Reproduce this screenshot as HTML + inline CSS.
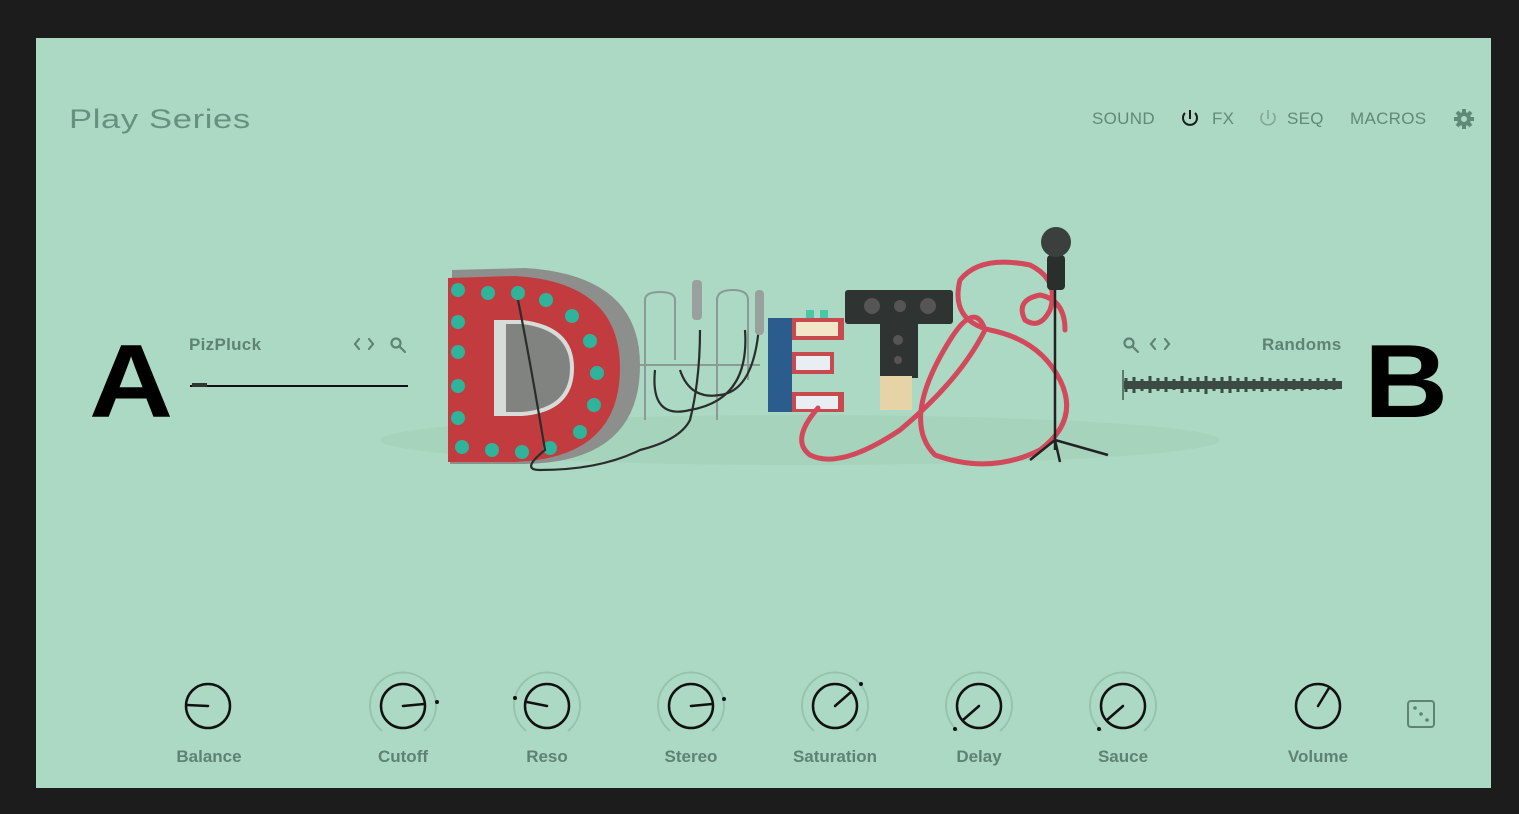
<!DOCTYPE html>
<html><head><meta charset="utf-8"><style>
html,body{margin:0;padding:0}
body{width:1519px;height:814px;background:#1c1c1c;position:relative;overflow:hidden;font-family:"Liberation Sans",sans-serif}
#p{position:absolute;left:36px;top:38px;width:1455px;height:750px;background:#acd9c3}
.t{position:absolute;color:#5f8a77;font-size:17px;letter-spacing:0.3px}
.lbl{position:absolute;color:#5f8373;font-size:17px;font-weight:bold;width:140px;text-align:center;top:747px}
.big{position:absolute;font-size:104px;font-weight:900;color:#000;line-height:1;transform:scaleX(1.12);transform-origin:left top}
</style></head><body>
<div id="p"></div>
<div class="t" style="left:69px;top:104px;font-size:27px;letter-spacing:0.5px;transform:scaleX(1.28);transform-origin:left top;color:#65917e">Play Series</div>
<div class="t" style="left:1092px;top:109px">SOUND</div>
<div class="t" style="left:1212px;top:109px">FX</div>
<div class="t" style="left:1287px;top:109px">SEQ</div>
<div class="t" style="left:1350px;top:109px">MACROS</div>
<div class="t" style="left:189px;top:335px;font-weight:bold;font-size:17px;color:#5f8373">PizPluck</div>
<div class="t" style="left:1262px;top:335px;font-weight:bold;font-size:17px;color:#5f8373">Randoms</div>
<div class="big" style="left:89px;top:330px">A</div>
<div class="big" style="left:1364px;top:330px">B</div>
<div class="lbl" style="left:139px">Balance</div>
<div class="lbl" style="left:333px">Cutoff</div>
<div class="lbl" style="left:477px">Reso</div>
<div class="lbl" style="left:621px">Stereo</div>
<div class="lbl" style="left:765px">Saturation</div>
<div class="lbl" style="left:909px">Delay</div>
<div class="lbl" style="left:1053px">Sauce</div>
<div class="lbl" style="left:1248px">Volume</div>
<svg width="1519" height="814" style="position:absolute;left:0;top:0">
<g fill="none" stroke="#1a1a1a" stroke-width="2">
<path d="M1185 113 A7 7 0 1 0 1195 113"/><path d="M1190 110 V119"/>
</g>
<g fill="none" stroke="#7fa896" stroke-width="1.6">
<path d="M1263 113 A7 7 0 1 0 1273 113"/><path d="M1268 110 V119"/>
</g>
<g transform="translate(1464 119)" fill="#5f8a77">
<circle r="7"/>
<g stroke="#5f8a77" stroke-width="4"><path d="M0 -10 V10 M-10 0 H10 M-7 -7 L7 7 M-7 7 L7 -7"/></g>
<circle r="3" fill="#acd9c3"/>
</g>
<g fill="none" stroke="#5f8373" stroke-width="2.2" stroke-linecap="round">
<path d="M359 339 L355 344 L359 349 M369 339 L373 344 L369 349"/>
<circle cx="396" cy="343" r="4.5"/><path d="M399 346 L405 352"/>
<circle cx="1129" cy="343" r="4.5"/><path d="M1132 346 L1138 352"/>
<path d="M1155 339 L1151 344 L1155 349 M1165 339 L1169 344 L1165 349"/>
</g>
<path d="M190 386 H408" stroke="#111" stroke-width="2"/>
<path d="M192 385 H207" stroke="#333" stroke-width="4"/>
<path d="M1123 370 V400" stroke="#2a3a33" stroke-width="1.2"/>
<rect x="1124" y="381" width="218" height="8" fill="#3b4a43"/>
<path d="M1126 378 v14 M1134 377 v16 M1142 379 v12 M1150 376 v17 M1158 378 v13 M1166 377 v15 M1174 379 v11 M1182 376 v17 M1190 378 v14 M1198 377 v15 M1206 376 v18 M1214 378 v13 M1222 377 v16 M1230 376 v17 M1238 378 v14 M1246 377 v15 M1254 379 v12 M1262 377 v15 M1270 378 v13 M1278 379 v12 M1286 378 v13 M1294 379 v11 M1302 378 v13 M1310 379 v11 M1318 378 v12 M1326 379 v11 M1334 378 v12" stroke="#3b4a43" stroke-width="3"/>
<ellipse cx="800" cy="440" rx="420" ry="25" fill="#a0ceb8" opacity="0.6"/>
<path d="M452 270 L525 268 Q640 275 640 365 Q640 462 525 464 L450 464 Z" fill="#8d8f8d"/>
<path d="M448 278 L515 276 Q620 282 620 368 Q620 458 515 462 L448 462 Z" fill="#c23c3f"/>
<path d="M494 320 L522 320 Q574 326 574 368 Q574 412 522 416 L494 416 Z" fill="#d8dcd8"/>
<path d="M506 324 L522 324 Q570 330 570 368 Q570 408 522 412 L506 412 Z" fill="#2a2a2a" opacity="0.5"/>
<g fill="#2fb39a">
<circle cx="458" cy="290" r="7"/><circle cx="488" cy="293" r="7"/><circle cx="518" cy="293" r="7"/><circle cx="546" cy="300" r="7"/><circle cx="572" cy="316" r="7"/><circle cx="590" cy="341" r="7"/><circle cx="597" cy="373" r="7"/><circle cx="594" cy="405" r="7"/><circle cx="580" cy="432" r="7"/>
<circle cx="458" cy="322" r="7"/><circle cx="458" cy="352" r="7"/><circle cx="458" cy="386" r="7"/><circle cx="458" cy="418" r="7"/><circle cx="462" cy="447" r="7"/><circle cx="492" cy="450" r="7"/><circle cx="522" cy="452" r="7"/><circle cx="550" cy="448" r="7"/>
</g>
<g fill="none" stroke="#8a9a94" stroke-width="2">
<path d="M645 420 V300 Q645 292 660 292 Q675 292 675 300 V360"/>
<path d="M717 420 V300 Q717 290 733 290 Q748 290 748 300 V380"/>
<path d="M640 365 H760"/>
</g>
<g fill="none" stroke="#2a2d2c" stroke-width="2.2">
<path d="M518 300 Q530 360 545 450 Q520 470 540 470 Q600 470 640 450 Q680 440 690 420 Q700 380 700 330"/>
<path d="M655 370 Q650 420 690 410 Q750 400 745 330"/>
<path d="M680 370 Q690 400 720 395 Q760 390 760 300"/>
</g>
<rect x="692" y="280" width="10" height="40" rx="4" fill="#9aa09e"/>
<rect x="755" y="290" width="9" height="45" rx="4" fill="#9aa09e"/>
<rect x="768" y="318" width="24" height="94" fill="#2b5c8e"/>
<rect x="792" y="318" width="52" height="22" fill="#c94a4e"/><rect x="796" y="322" width="42" height="14" fill="#f3e6c8"/>
<rect x="792" y="352" width="42" height="22" fill="#c94a4e"/><rect x="796" y="356" width="34" height="14" fill="#e8eef2"/>
<rect x="792" y="392" width="52" height="20" fill="#c94a4e"/><rect x="796" y="396" width="42" height="13" fill="#e8eef2"/>
<rect x="806" y="310" width="8" height="8" fill="#4bc7a8"/><rect x="820" y="310" width="8" height="8" fill="#4bc7a8"/>
<rect x="845" y="290" width="108" height="34" rx="3" fill="#2f3331"/>
<rect x="880" y="322" width="38" height="56" fill="#2f3331"/>
<rect x="880" y="376" width="32" height="34" fill="#e7d3a8"/>
<g fill="#555"><circle cx="872" cy="306" r="8"/><circle cx="900" cy="306" r="6"/><circle cx="928" cy="306" r="8"/><circle cx="898" cy="340" r="5"/><circle cx="898" cy="360" r="4"/></g>
<g fill="none" stroke="#d1495a" stroke-width="5" stroke-linecap="round">
<path d="M818 408 Q790 440 810 455 Q840 470 900 430 Q960 380 985 330 Q975 300 950 340 Q900 420 935 455 Q990 475 1040 450 Q1080 420 1060 380 Q1040 340 990 330 Q950 320 960 280 Q980 255 1030 265 Q1060 280 1050 310 Q1040 330 1025 320 Q1015 300 1040 295 Q1065 300 1065 330"/>
</g>
<path d="M1055 250 V450 M1055 440 L1030 460 M1055 440 L1108 455 M1055 440 L1060 462" stroke="#222" stroke-width="2.5" fill="none"/>
<rect x="1047" y="255" width="18" height="35" rx="4" fill="#2a2e2c"/>
<circle cx="1056" cy="242" r="15" fill="#3b403e"/>
<g fill="none" stroke="#95c3ad" stroke-width="2">
<path d="M382 731 A33 33 0 1 1 424 731"/><path d="M526 731 A33 33 0 1 1 568 731"/><path d="M670 731 A33 33 0 1 1 712 731"/><path d="M814 731 A33 33 0 1 1 856 731"/><path d="M958 731 A33 33 0 1 1 1000 731"/><path d="M1102 731 A33 33 0 1 1 1144 731"/>
</g>
<g fill="none" stroke="#111" stroke-width="2.5" stroke-linecap="round">
<circle cx="208" cy="706" r="22"/><path d="M208 706 L187 705"/>
<circle cx="403" cy="706" r="22"/><path d="M403 706 L424 704"/>
<circle cx="547" cy="706" r="22"/><path d="M547 706 L527 702"/>
<circle cx="691" cy="706" r="22"/><path d="M691 706 L712 704"/>
<circle cx="835" cy="706" r="22"/><path d="M835 706 L851 692"/>
<circle cx="979" cy="706" r="22"/><path d="M979 706 L963 720"/>
<circle cx="1123" cy="706" r="22"/><path d="M1123 706 L1107 720"/>
<circle cx="1318" cy="706" r="22"/><path d="M1318 706 L1329 688"/>
</g>
<g fill="#111"><circle cx="437" cy="702" r="2"/><circle cx="515" cy="698" r="2"/><circle cx="724" cy="699" r="2"/><circle cx="861" cy="684" r="2"/><circle cx="955" cy="729" r="2"/><circle cx="1099" cy="729" r="2"/></g>
<rect x="1408" y="701" width="26" height="26" rx="3" fill="none" stroke="#5f8373" stroke-width="2"/>
<g fill="#5f8373"><circle cx="1415" cy="708" r="1.8"/><circle cx="1421" cy="714" r="1.8"/><circle cx="1427" cy="720" r="1.8"/></g>
</svg>
</body></html>
